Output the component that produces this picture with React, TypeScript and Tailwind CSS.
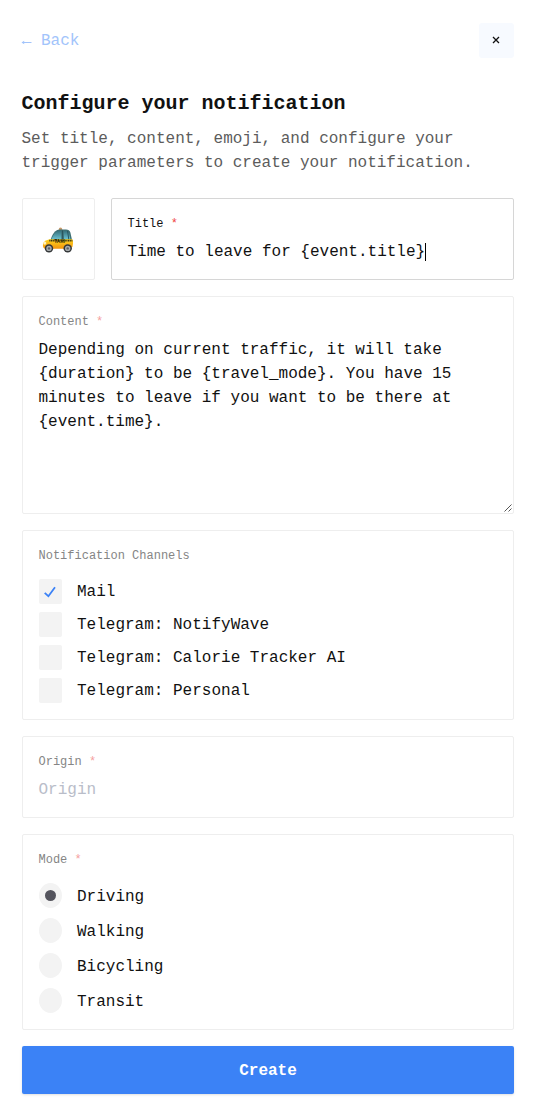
import type { ReactNode } from "react";

function Label({ children, required, active }: { children: ReactNode; required?: boolean; active?: boolean }) {
  return (
    <div className={`-ml-[0.5px] pt-px text-xs leading-4 whitespace-pre ${active ? "text-[#111]" : "text-[#858585]"}`}>
      {children}
      {required && <span className={active ? "text-[#ef4444]" : "text-[#f5a0a0]"}> *</span>}
    </div>
  );
}

function Taxi() {
  return (
    <svg width="32" height="28" viewBox="0 0 32 28" aria-label="Taxi" className="mt-0.5 -ml-0.5">
      <defs>
        <linearGradient id="body" x1="0" y1="0" x2="0" y2="1">
          <stop offset="0" stopColor="#ffd820" />
          <stop offset="1" stopColor="#f3920c" />
        </linearGradient>
        <linearGradient id="glass" x1="0" y1="0" x2="0" y2="1">
          <stop offset="0" stopColor="#35707c" />
          <stop offset="1" stopColor="#6cc3d2" />
        </linearGradient>
      </defs>
      <path d="M16.6 4L17.2 2Q18.4 .8 19.8 2L20.4 4Z" fill="#c79a6b" />
      <path d="M8.5 14Q10.5 8 13 5.6Q15 3.8 18 3.6H24Q27.5 3.8 28.4 6.5L30 14Z" fill="#3d6f73" />
      <path d="M9.4 13.5Q11.8 7.4 14.3 5.8Q16.3 4.6 19.4 4.7V13.5Z" fill="url(#glass)" />
      <path d="M21.4 4.8H24.6Q26.5 5 27.1 7.3L28.5 13.5H21.8Z" fill="url(#glass)" />
      <path d="M20.5 4.4L20.9 13.5M25.6 5L26.8 13.5" stroke="#244e58" strokeWidth=".9" />
      <path d="M7.5 13.2H30.3Q31.4 14.8 31 17.8L30.5 20.6L28.5 22.8H3.2Q1 22.1 .9 20Q.9 16.1 3.2 14.7Z" fill="url(#body)" />
      <path d="M7.3 14.6H30.4" stroke="#42370f" strokeWidth="1.6" strokeDasharray="1.2 .5" />
      <text x="12.3" y="17.1" fontSize="4.8" fontWeight="700" fill="#2b2405" className="font-['Liberation_Sans',sans-serif]">TAXI</text>
      <ellipse cx="2.8" cy="17.1" rx="1.5" ry="1.7" fill="#fff2bb" />
      <circle cx="7" cy="22.4" r="4.2" fill="#343739" />
      <circle cx="7" cy="22.4" r="2.7" fill="#a8acad" />
      <circle cx="7" cy="22.4" r="1.2" fill="#5c6062" />
      <circle cx="25.7" cy="22.4" r="4.2" fill="#343739" />
      <circle cx="25.7" cy="22.4" r="2.7" fill="#a8acad" />
      <circle cx="25.7" cy="22.4" r="1.2" fill="#5c6062" />
    </svg>
  );
}

const channels = ["Mail", "Telegram: NotifyWave", "Telegram: Calorie Tracker AI", "Telegram: Personal"];
const modes = ["Driving", "Walking", "Bicycling", "Transit"];
const panel = "rounded-[2px] border border-[#eeeeee] p-4";

export default function App() {
  return (
    <main className="min-h-[1117px] w-full bg-white pt-[23px] pr-[23px] pl-[22px] font-['Liberation_Mono',monospace] text-base leading-6 text-[#111]">
      <header className="flex h-[35px] items-center justify-between">
        <a className="-ml-px flex items-center text-[#a2c4fb]">
          <svg width="11" height="6" viewBox="0 0 11 6" fill="none" stroke="currentColor" className="mt-[3px] mr-[9px]">
            <path d="M1 3.5H10.5" />
            <path d="M.5 3.5L3.2 1.7V5.3Z" fill="currentColor" stroke="none" />
          </svg>
          Back
        </a>
        <button aria-label="Close" className="flex size-[35px] items-center justify-center rounded-[3px] bg-[#f7faff]">
          <svg width="8" height="8" viewBox="0 0 8 8" stroke="#111" strokeWidth="1.3" className="-mt-px -ml-px">
            <path d="M1 1L7 7M7 1L1 7" />
          </svg>
        </button>
      </header>

      <h1 className="mt-8 -ml-[0.5px] text-xl leading-7 font-bold">Configure your notification</h1>
      <p className="mt-2 -mb-px -ml-[0.5px] pt-px text-[#5c5c5c]">
        Set title, content, emoji, and configure your<br />
        trigger parameters to create your notification.
      </p>

      <form className="mt-6 flex flex-col gap-4">
        <div className="flex h-[82px] gap-4">
          <div className="flex w-[73px] items-center justify-center rounded-[2px] border border-[#eeeeee]">
            <Taxi />
          </div>
          <div className="flex-1 rounded-[2px] border border-[#d6d6d6] p-4">
            <Label required active>Title</Label>
            <div className="mt-2 -ml-[0.5px] flex items-center">
              <span>Time to leave for {"{event.title}"}</span>
              <span className="-ml-[0.5px] h-[18px] w-px bg-black" />
            </div>
          </div>
        </div>

        <div className={`relative h-[218px] ${panel}`}>
          <Label required>Content</Label>
          <p className="mt-2 -ml-[0.5px]">
            Depending on current traffic, it will take<br />
            {"{duration}"} to be {"{travel_mode}"}. You have 15<br />
            minutes to leave if you want to be there at<br />
            {"{event.time}"}.
          </p>
          <svg width="8" height="8" viewBox="0 0 8 8" stroke="#555" className="absolute right-px bottom-px" fill="none">
            <path d="M.5 7.5L7.5 .5M4.5 7.5L7.5 4.5" />
          </svg>
        </div>

        <div className={`h-[190px] ${panel}`}>
          <Label>Notification Channels</Label>
          <div className="mt-[15px] flex flex-col gap-2">
            {channels.map((name, index) => (
              <div key={name} className="flex h-[25px] items-center">
                <span className="mr-[15px] flex h-[25px] w-[23px] items-center justify-center rounded-[2px] bg-[#f3f3f3]">
                  {index === 0 && (
                    <svg width="12" height="12" viewBox="0 0 12 12" fill="none" stroke="#3b82f6" strokeWidth="1.8" className="mt-px -ml-px">
                      <path d="M.7 6.8L4.4 10.2L11 1.3" />
                    </svg>
                  )}
                </span>
                <span>{name}</span>
              </div>
            ))}
          </div>
        </div>

        <div className={`h-[82px] ${panel}`}>
          <Label required>Origin</Label>
          <div className="mt-2 -ml-[0.5px] text-[#b9bdc9]">Origin</div>
        </div>

        <div className={`h-[196px] ${panel}`}>
          <Label required>Mode</Label>
          <div className="mt-[15px] flex flex-col gap-[10px]">
            {modes.map((name, index) => (
              <div key={name} className="flex h-[25px] items-center">
                <span className="mr-[15px] flex h-[25px] w-[23px] items-center justify-center rounded-[50%] bg-[#f3f3f3]">
                  {index === 0 && <span className="size-[11px] rounded-full bg-[#54545d]" />}
                </span>
                <span className="pt-[2px]">{name}</span>
              </div>
            ))}
          </div>
        </div>

        <button type="button" className="h-12 rounded-[2px] bg-[#3b82f6] pt-px font-bold text-white shadow-sm">Create</button>
      </form>
    </main>
  );
}
